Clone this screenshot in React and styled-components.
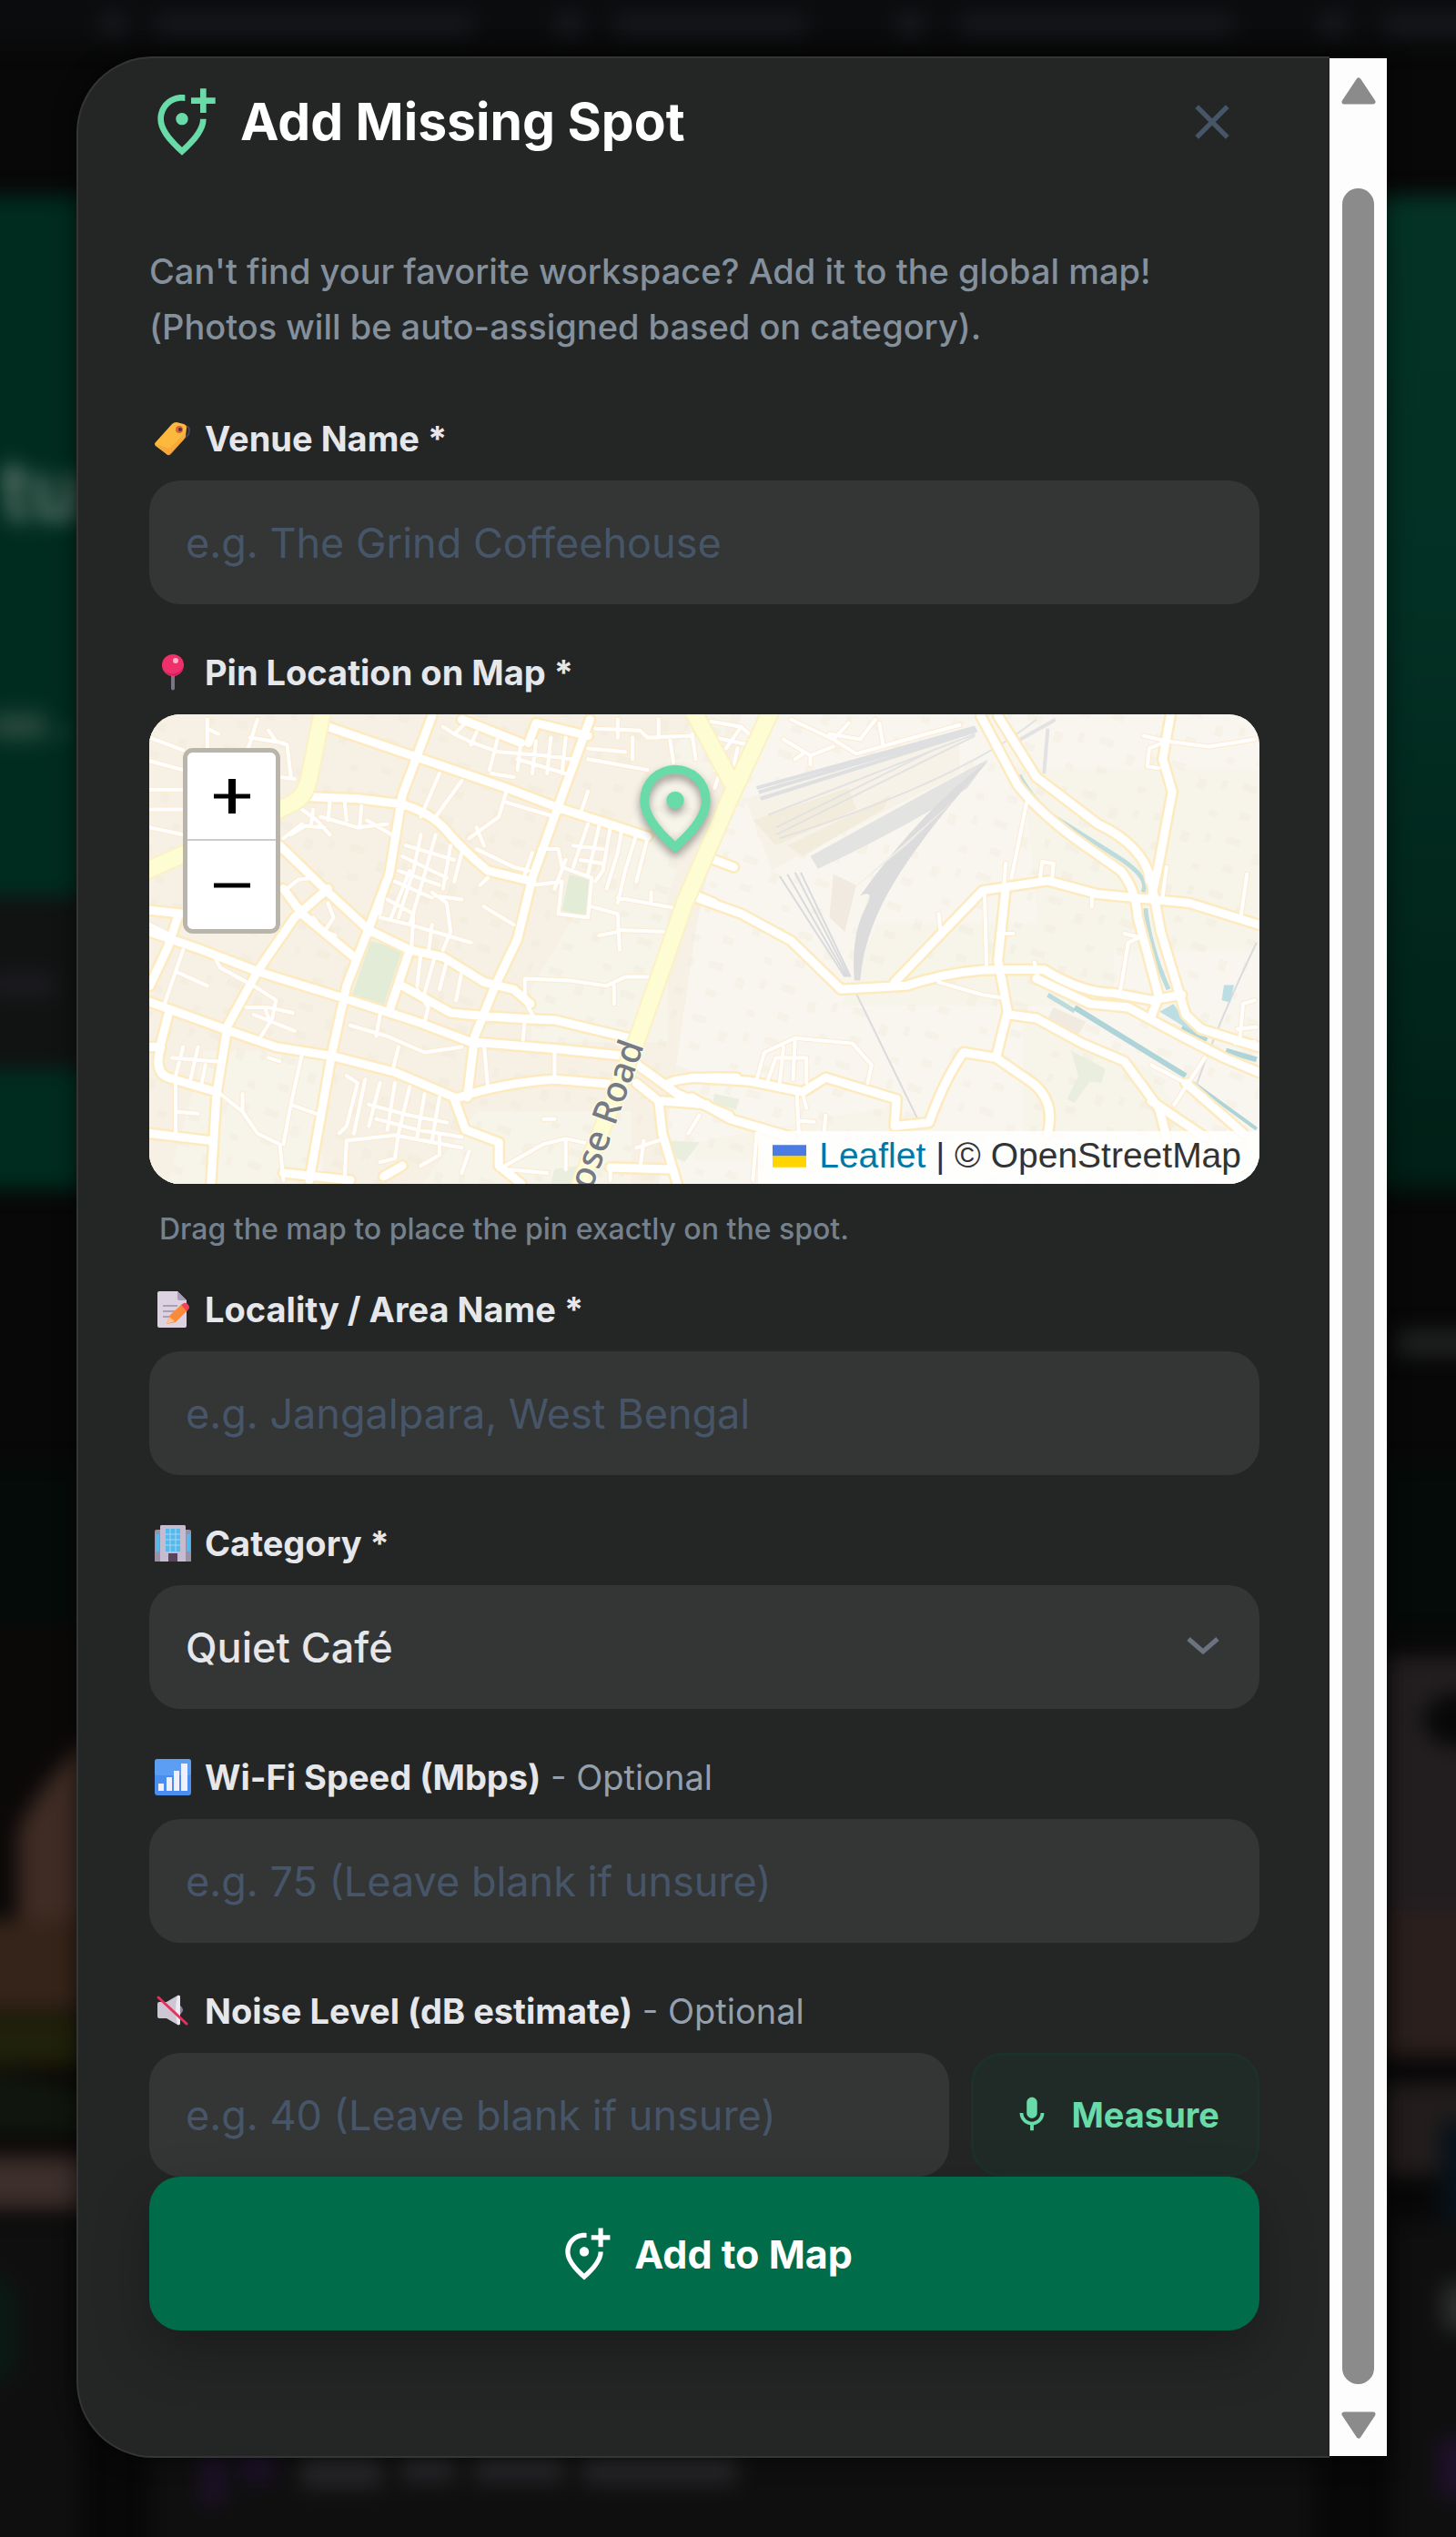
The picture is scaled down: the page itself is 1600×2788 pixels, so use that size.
import styled, { createGlobalStyle } from "styled-components";
import { useState } from "react";
import { MdOutlineAddLocationAlt, MdOutlineMic, MdClose } from "react-icons/md";

const GlobalStyle = createGlobalStyle`
  * { box-sizing: border-box; }
  body {
    margin: 0;
    background: #080909;
    font-family: Inter, "Liberation Sans", sans-serif;
    color: #e5e7eb;
  }
  button, input, select { font-family: inherit; }
`;

const Page = styled.div`
  position: relative;
  min-height: 100vh;
  overflow: hidden;
`;
const BackdropArt = styled.svg`
  position: absolute;
  top: 0;
  left: 0;
  width: 100%;
  height: 100%;
`;
const Overlay = styled.div`
  position: relative;
  display: flex;
  padding: 62px 76px 86px 84px;
`;
const Modal = styled.section`
  flex: 1;
  display: flex;
  min-width: 0;
  border-radius: 84px 0 0 84px;
  box-shadow: 0 0 24px rgba(0, 0, 0, 0.6);
`;
const ModalBody = styled.div`
  flex: 1;
  min-width: 0;
  padding: 28px 77px 138px 78px;
  border: 2px solid #343635;
  border-right: none;
  border-radius: 84px 0 0 84px;
  background: #242625;
`;
const ScrollTrack = styled.div`
  display: flex;
  flex-direction: column;
  align-items: center;
  width: 63px;
  margin: 2px 0;
  padding: 20px 0 18px;
  background: #fdfdfd;
`;
const ScrollThumb = styled.div`
  flex: 1;
  width: 35px;
  margin: 92px 0 30px;
  border-radius: 18px;
  background: #8b8b8b;
`;
const ScrollArrow = styled.svg`
  width: 40px;
  height: 31px;
  fill: #8b8b8b;
  stroke: #8b8b8b;
  stroke-width: 5;
  stroke-linejoin: round;
`;

const Header = styled.header`
  display: flex;
  align-items: center;
  justify-content: space-between;
  height: 84px;
  margin-bottom: 92px;
  padding-right: 20px;
`;
const Title = styled.h2`
  display: flex;
  align-items: center;
  gap: 24px;
  margin: 0;
  font-size: 57px;
  font-weight: 700;
  line-height: 84px;
  color: #ffffff;

  svg {
    color: #68dba9;
    margin-left: -4px;
  }
`;
const CloseButton = styled.button`
  display: flex;
  padding: 0;
  border: none;
  background: none;
  color: #475569;
`;
const Intro = styled.p`
  margin: 0 0 62px;
  font-size: 38px;
  font-weight: 500;
  line-height: 61px;
  color: #84909c;
`;

const Form = styled.form`
  display: flex;
  flex-direction: column;
`;
const Field = styled.div`
  display: flex;
  flex-direction: column;
  gap: 16px;
  margin-bottom: ${(props) => props.$space ?? 45}px;
`;
const Label = styled.label`
  display: flex;
  align-items: center;
  padding-left: 6px;
  font-size: 38px;
  font-weight: 700;
  line-height: 60px;
  color: #e5e7eb;
  white-space: pre;

  svg {
    width: 40px;
    height: 40px;
    margin-right: 15px;
  }
`;
const Optional = styled.span`
  font-weight: 400;
  color: #94a0ad;
`;
const TextInput = styled.input`
  flex: 1;
  width: 100%;
  min-width: 0;
  min-height: 136px;
  padding: 0 40px;
  border: none;
  border-radius: 34px;
  background: #333635;
  font-size: 45px;
  color: #e5e7eb;

  &::placeholder {
    color: #475569;
    opacity: 1;
  }
`;
const SelectWrap = styled.div`
  position: relative;
  display: flex;

  svg {
    position: absolute;
    right: 40px;
    top: 46px;
    pointer-events: none;
  }
`;
const Select = styled.select`
  width: 100%;
  height: 136px;
  padding: 0 40px;
  border: none;
  border-radius: 34px;
  background: #333635;
  appearance: none;
  font-size: 45px;
  font-weight: 500;
  color: #e5e7eb;
`;
const InputRow = styled.div`
  display: flex;
  gap: 24px;
`;
const MeasureButton = styled.button`
  display: flex;
  align-items: center;
  justify-content: center;
  gap: 20px;
  padding: 0 41px;
  border: 3px solid #1c3129;
  border-radius: 34px;
  background: #202b28;
  font-size: 38px;
  font-weight: 700;
  color: #68dba9;
`;
const SubmitButton = styled.button`
  display: flex;
  align-items: center;
  justify-content: center;
  gap: 24px;
  height: 169px;
  border: none;
  border-radius: 34px;
  background: #006c49;
  box-shadow: 0 24px 60px rgba(0, 0, 0, 0.25);
  font-size: 43px;
  font-weight: 700;
  color: #ffffff;
`;

const MapBox = styled.div`
  position: relative;
  height: 516px;
  border-radius: 34px;
  overflow: hidden;
  background: #f7f3ea;
`;
const MapArt = styled.svg`
  display: block;
  width: 100%;
  height: 100%;

  path { vector-effect: non-scaling-stroke; }
`;
const ZoomControl = styled.div`
  position: absolute;
  left: 37px;
  top: 37px;
  display: flex;
  flex-direction: column;
  border: 5px solid #b9b5ab;
  border-radius: 11px;
`;
const ZoomButton = styled.button`
  display: flex;
  align-items: center;
  justify-content: center;
  width: 97px;
  height: 97px;
  padding: 0;
  border: none;
  border-bottom: ${(props) => (props.$divided ? "2px solid #cccccc" : "none")};
  border-radius: ${(props) => (props.$divided ? "6px 6px 0 0" : "0 0 6px 6px")};
  background: #ffffff;
`;
const MapPin = styled.svg`
  position: absolute;
  left: 50%;
  top: 46px;
  width: 116px;
  height: 116px;
  margin-left: -90px;
  fill: #68dba9;
  filter: drop-shadow(0 5px 5px rgba(0, 0, 0, 0.4));
`;
const Attribution = styled.div`
  position: absolute;
  right: 0;
  bottom: 0;
  display: flex;
  align-items: center;
  padding: 0 20px 4px 16px;
  background: rgba(255, 255, 255, 0.85);
  font-family: "Liberation Sans", Arial, sans-serif;
  font-size: 39px;
  line-height: 54px;
  white-space: pre;
  color: #333333;

  a {
    display: flex;
    align-items: center;
    gap: 14px;
    color: #0078a8;
    text-decoration: none;
  }
`;
const Hint = styled.p`
  margin: 12px 0 0;
  padding-left: 11px;
  font-size: 32px;
  font-weight: 500;
  line-height: 44px;
  color: #75818d;
`;

const TagIcon = () => (
  <svg viewBox="0 0 40 40" aria-hidden="true">
    <path d="M28 8q10-4 10 3t-8 9" fill="none" stroke="#4a4356" strokeWidth="2" />
    <path d="M1 24 19 4q2-2 5-2l8 2q3 1 3 4l-1 9q0 2-2 4L17 37q-2 2-4 0L1 28q-2-2 0-4z" fill="#fdb93e" />
    <path d="M1 26 14 38q2 1 4-1l14-16 2-8-16 16q-2 2-4 1z" fill="#f79f3c" opacity=".6" />
    <circle cx="27" cy="10" r="4" fill="#d9643a" />
    <circle cx="28" cy="10" r="2" fill="#4a2f4e" />
  </svg>
);
const PushpinIcon = () => (
  <svg viewBox="0 0 40 40" aria-hidden="true">
    <path d="M18 20h4v18q-2 3-4 0z" fill="#7b7482" />
    <circle cx="20" cy="12" r="12" fill="#f0306a" />
    <path d="M9 16a12 12 0 0 0 23-4 13 13 0 0 1-23 4z" fill="#cc2160" />
    <circle cx="23" cy="7" r="3" fill="#ffb3cb" />
  </svg>
);
const MemoIcon = () => (
  <svg viewBox="0 0 40 40" aria-hidden="true">
    <path d="M3 2q0-2 2-2h20l10 10v28q0 2-2 2H5q-2 0-2-2z" fill="#dcd2e2" />
    <path d="M25 0l10 10H27q-2 0-2-2z" fill="#a99db8" />
    <path d="M9 15h16v2H9zm0 6h13v2H9zm0 6h8v2H9z" fill="#aaa0b5" />
    <path d="M13 36l3-9 13-12 7 6-13 13z" fill="#f98a3c" />
    <path d="M29 15l3-2q3-1 5 2t0 5l-2 2z" fill="#f2435b" />
    <path d="M13 36l3-8 6 5z" fill="#ffc38d" />
  </svg>
);
const OfficeIcon = () => (
  <svg viewBox="0 0 40 40" aria-hidden="true">
    <path d="M0 7q0-2 2-2h6v35H0zM32 5h6q2 0 2 2v33h-8z" fill="#9b91a6" />
    <path d="M6 1q0-1 2-1h24q2 0 2 1v39H6z" fill="#c6bccf" />
    <path d="M12 4h16v25H12zM1 10h4v19H1zM35 10h4v19h-4z" fill="#55b9ee" />
    <path d="M17 4v25M23 4v25M12 10h16M12 16h16M12 22h16" stroke="#a7d6ee" strokeWidth="1" />
    <path d="M15 31h10v9H15z" fill="#59445f" />
  </svg>
);
const SignalIcon = () => (
  <svg viewBox="0 0 40 40" aria-hidden="true">
    <rect width="40" height="40" rx="3" fill="#4a8ff0" />
    <rect width="40" height="18" rx="3" fill="#68a8f7" opacity=".6" />
    <path d="M4 27h6v8H4zM13 20h6v15h-6zM21 13h6v22h-6zM29 5h7v30h-7z" fill="#f3eefb" />
  </svg>
);
const MutedIcon = () => (
  <svg viewBox="0 0 40 40" aria-hidden="true">
    <path d="M3 12q0-2 2-2h8L25 3q3-1 3 2v28q0 3-3 2l-12-7H5q-2 0-2-2z" fill="#cfc6d4" />
    <path d="M25 3q3-1 3 2v28q0 3-3 2-4-16 0-32z" fill="#eee8f0" />
    <path d="M28 14q6 4 0 10z" fill="#8d8396" />
    <path d="M4 5l31 29" stroke="#e8305f" strokeWidth="3" strokeLinecap="round" />
  </svg>
);

const westMinor = `
M60 100 150 135M60 165 150 190M60 245 150 245M60 300 150 300M60 350 150 370M215 50 215 130M215 75 245 90M350 50 325 130M380 80 400 110 430 120 440 210
M330 100 420 115M410 210 450 215M470 300 510 330 545 370M440 370 480 345 530 350M500 300 495 340M545 280 540 330M585 280 590 330M630 290 625 350M520 320 620 350 700 340M645 330 720 375
M60 620 120 650M150 690 100 840M130 750 215 790M230 700 250 740 340 790 400 830 390 880 360 930M320 850 380 850 445 865M340 870 450 915M370 850 380 880
M430 520 460 495 500 490M540 560 555 600 530 640M500 600 530 640 560 650M420 380 470 340
M850 70 880 90 920 50M880 90 930 115 1000 140M940 85 925 120M1000 90 975 190M1060 110 1050 190M1100 110 1090 200M1140 100 1130 200M1180 100 1170 200M1000 140 1120 150 1200 160M1050 160 1180 200M980 200 1040 210
M1240 160 1400 190M1260 75 1380 80 1400 100 1520 95M1320 50 1320 100M1360 100 1360 160M1430 50 1430 100M1460 100 1470 170M1520 90 1530 160M1240 130 1340 140
M840 200 790 320M900 220 830 320M1020 250 1000 320 920 380M1020 280 1150 320M940 350 960 400M1240 250 1220 310
M750 400 880 440M740 430 860 490M730 470 840 510M720 500 820 545M700 550 770 590M790 370 770 470 730 600M830 370 800 480 760 620M870 400 850 520M900 420 880 500
M680 600 760 620 860 650 925 670M820 530 860 560 870 640 850 690M830 540 900 550M770 590 765 680M820 620 810 700M760 470 710 600M700 490 680 590
M960 570 1040 620M940 410 1040 460 1080 470M1090 420 1070 480M970 490 950 510M1110 410 1160 410 1170 460 1250 490 1240 600 1160 590 1170 500 1090 510M1180 440 1150 520
M1240 340 1200 460M1270 345 1240 480M1300 350 1280 470 1260 500M1330 360 1320 420 1290 520M1370 370 1340 470 1320 560M1400 380 1370 500M1200 400 1280 410M1220 440 1280 450M1250 570 1320 590 1325 690M1320 545 1480 575M1320 635 1450 640M1270 650 1320 640M1410 530 1410 560
M1070 770 1190 775 1290 790 1340 765 1420 765M1070 770 1070 820M1310 790 1310 840M1070 830 1090 870M900 750 885 830M830 700 800 810M790 700 780 790M860 720 840 800M780 800 810 850 800 890
M600 900 700 930 800 975 900 960M680 870 670 930M730 960 715 1020M1070 880 1065 940M1150 970 1150 1050M960 950 970 1070
M150 960 130 1040M190 960 170 1050M120 990 240 1000M210 1010 200 1060M130 1060 130 1200M130 1140 190 1145M250 1090 310 1140 350 1200 410 1230 420 1330M310 1090 310 1140M470 980 440 1120 420 1230M440 1120 520 1150M380 990 410 1000
M590 1040 620 1060 590 1180 570 1200M640 1050 610 1200M680 1060 650 1180M720 1060 700 1190M760 1070 730 1200M800 1090 780 1210M840 1100 820 1220M650 1120 760 1150 860 1170M670 1160 780 1190 900 1210M590 1220 720 1205 900 1240M590 1220 585 1320M680 1280 720 1270 730 1200M790 1290 840 1260 840 1200M900 1310 920 1250
M1000 1300 1120 1230 1180 1215 1250 1230M1180 1220 1180 1300M1020 1300 1130 1310M1390 1220 1380 1300M1300 1290 1300 1330M1370 1240 1430 1220M1120 1160 1150 1160M1510 1200 1540 1150`;

const westMajor = `
M540 70 780 155 1020 240 1160 295 1400 375M820 40 740 260 705 480 650 630 590 790 550 980 490 1330M1245 50 1160 290 1090 490 1050 660 990 790 935 930 915 1100
M490 265 620 270 740 285Q820 310 860 360T970 470L1090 500M410 400 530 520 650 635 760 690 850 710 960 780 1040 800 1085 840
M60 640 200 690 350 750 600 830 780 890 920 945 1150 965 1340 985M60 835 260 910 400 960 550 985 720 1030 880 1100
M540 520 450 600 350 750 270 900 240 1090 225 1340M740 790 870 865Q1000 880 1150 885L1350 935M880 1105Q1000 1060 1150 1050L1320 1065
M420 520 470 590 610 710M900 50 1060 115M1080 115 1100 60 1240 95M880 1105 910 1190 1000 1225 1000 1290 1060 1340M60 1200 220 1220
M60 960 90 960Q70 1030 110 1045L240 1085M1360 1000 1480 1090 1620 1150M1370 1060 1430 1110 1440 1200 1480 1340M1450 1065Q1480 1040 1640 1045M1440 1110 1560 1120
M135 600 110 680 60 790M60 580 150 590M760 690 705 860M420 1310 600 1330M690 1320 740 1290M1300 1295 1460 1300M1510 530 1580 560M110 870 90 950`;

const eastMinor = `
M50 55 130 70 160 100M130 70 90 130M60 100 150 120M60 190 90 160M120 130 110 180M70 210 60 240M260 50 370 105 430 145M410 60 370 105M360 90 440 105 480 50M490 60 500 120M430 145 580 100 700 65M240 105 310 150 370 125M310 150 310 175M270 160 290 145
M875 280 835 490M820 450 815 520M765 530 770 740M645 590 650 640M910 490 915 445 945 450 940 500M1045 540 1045 570M800 645 840 645M1240 460 1230 540M1450 480 1435 590M1130 645 1170 655 1140 670 1120 800M645 780 760 815 820 825
M1180 95 1240 110 1350 125 1470 105M1240 110 1195 130 1190 180 1220 185M170 1050 190 975 270 935 420 950 470 1010 460 1060M200 1050 220 990 300 990 300 1060M240 960 230 1060M270 940 265 1050M275 1090 280 1200M280 1165 320 1168M350 1150 345 1210M290 1090 300 1130
M170 1200 160 1330M1470 830 1440 840 1430 950M1420 950 1470 945M1425 910 1475 905M1340 990 1260 1120M1200 1010 1290 1060M895 725 905 770M1180 440 1190 500`;

const eastMajor = `
M0 540 130 590 260 665 390 800 560 790Q690 745 800 745L920 745Q1020 810 1100 810L1200 830 1280 815M530 780 760 525 930 498 1060 535 1300 560 1480 620
M755 40 850 230Q900 300 1000 380L1120 470Q1160 520 1165 600L1220 820 1200 875M800 40 900 210 1060 340Q1180 400 1200 500L1225 640 1290 870 1330 910 1480 960
M1250 40 1230 160 1255 250 1220 450 1200 550M820 520 800 720 825 860 795 990 710 975Q660 1050 620 1170L530 1180M830 870 900 880 1020 950 1130 1000 1220 1130 1240 1210
M795 990 890 1060Q950 1110 930 1200M900 770 1040 840 1140 850 1280 930 1390 990 1480 1030M0 1045 150 1055 290 1085 350 1045 535 1105 530 1180M0 1100 100 1160 260 1210M60 440 110 460M1200 1110 1340 1210M1290 1060 1440 1200`;

const avenues =
  "M525 30 490 210Q480 270 430 290L160 420 40 475M1735 20 1622 270 1500 560 1440 740 1375 930 1300 1130 1215 1350M1525 30 1632 235";

const CityMap = () => (
  <MapArt viewBox="0 0 1220 516" preserveAspectRatio="xMidYMid slice" aria-hidden="true">
    <defs>
      <pattern id="blocks" width="83" height="61" patternUnits="userSpaceOnUse" patternTransform="rotate(18)">
        <path d="M6 5h16v8H6zM40 14h9v12h-9zM12 36h12v8H12zM62 44h9v7h-9zM66 8h6v10h-6z" fill="#efe8da" opacity=".3" />
      </pattern>
    </defs>
    <rect width="1220" height="516" fill="#f9f6ef" />
    <path d="M0 0h650L600 240 560 516H0z" fill="#f6f0e5" />
    <path d="M570 200 640 0h-40L420 300v60h150zM60 370h130v146H20zM300 516l60-80h170v80z" fill="#f7f4ea" />
    <path d="M960 60h260v200H980zM800 230h260v90H760zM960 330l140 60 50 70H960zM600 470l220-40v60H600z" fill="#f7f4ea" />
    <rect width="1220" height="516" fill="url(#blocks)" />

    <g transform="matrix(.4209 0 0 .3954 596 -14)">
      <path d="M140 270 700 90 700 200 290 420 210 470z" fill="#f6f2e7" />
      <path d="M160 330 410 240 430 300 220 400zM290 430 500 300 520 260 250 400z" fill="#f2ecdd" />
      <path d="M775 160Q700 200 310 430l20 35Q560 350 720 240z" fill="#e3e3e2" />
      <path d="M775 165Q600 300 440 540q40-20 15 30Q415 650 425 775l15 0Q450 640 530 500T775 165z" fill="#dcdcdc" />
      <path d="M560 400 650 310 700 260 400 540z" fill="#eeece7" />
      <path d="M740 72 170 240M742 75 175 252M745 80 180 270" fill="none" stroke="#dedfe0" strokeWidth="4" />
      <path d="M740 90 200 315M740 95 220 370M900 50Q700 220 230 380M640 130 220 350" fill="none" stroke="#e2e2e2" strokeWidth="2" />
      <path d="M850 110 950 50M930 75 920 200" fill="none" stroke="#e2e2e2" strokeWidth="4" />
      <path d="M230 485 400 765M250 480 405 765M270 475 410 765M285 475 415 765M420 790 590 1160M1475 670Q1380 880 1320 1060" fill="none" stroke="#d9dadd" strokeWidth="2" />
      <path d="M990 970 1080 1020 1070 1060 1040 1055 1000 1115 980 1105 1010 1040zM60 1090l65 15-10 30-60-20z" fill="#e9eede" />
      <path d="M945 850 1030 890 1010 925 930 880zM370 480 430 510 400 640 360 600z" fill="#f1eae0" />
      <path d="M855 205Q900 290 960 330T1110 430 1178 530M1185 575Q1195 680 1245 800M930 815 1000 860" fill="none" stroke="#bcdbdc" strokeWidth="5" />
      <path d="M1000 850 1290 1040M1395 970 1475 995M1280 905 1345 942" fill="none" stroke="#aed4d8" strokeWidth="6" />
      <path d="M1310 1060 1475 1188" fill="none" stroke="#aed4d8" strokeWidth="4" />
      <path d="M1222 862 1258 840 1300 905 1345 942zM1390 788h26l-10 48-22-6z" fill="#bcdde2" />
    </g>
    <g transform="matrix(.4082 0 0 .3954 -24 -14)">
      <path d="M655 665 740 690 690 845 605 815zM1190 480 1255 500 1240 600 1170 580z" fill="#e3ecd6" />
      <path d="M1150 1300 1220 1290 1210 1340 1140 1340zM1460 1220 1540 1225 1500 1280 1460 1260z" fill="#e9eede" />
    </g>

    <g fill="none" strokeLinejoin="round" strokeLinecap="round">
      <g transform="matrix(.4082 0 0 .3954 -24 -14)">
        <path d={westMinor} stroke="#fdeacf" strokeWidth="6" />
        <path d={westMajor} stroke="#fdebbf" strokeWidth="14" />
      </g>
      <g transform="matrix(.4209 0 0 .3954 596 -14)">
        <path d={eastMinor} stroke="#fdeacf" strokeWidth="6" />
        <path d={eastMajor} stroke="#fdebbf" strokeWidth="14" />
        <path d={eastMinor} stroke="#ffffff" strokeWidth="4" />
        <path d={eastMajor} stroke="#ffffff" strokeWidth="9" />
      </g>
      <g transform="matrix(.4082 0 0 .3954 -24 -14)">
        <path d={westMinor} stroke="#ffffff" strokeWidth="4" />
        <path d={westMajor} stroke="#ffffff" strokeWidth="9" />
        <path d={avenues} stroke="#fcf0c6" strokeWidth="21" />
        <path d={avenues} stroke="#fefcd2" strokeWidth="17" />
      </g>
    </g>
    <text
      transform="translate(544 364) rotate(-70)"
      textAnchor="end"
      fontFamily="Noto Sans, sans-serif"
      fontSize="39"
      fontWeight="500"
      fill="#757a85"
      stroke="#fdfbe6"
      strokeWidth="3"
      paintOrder="stroke"
    >
      ose Road
    </text>
  </MapArt>
);

const Backdrop = () => (
  <BackdropArt viewBox="0 0 1600 2788" preserveAspectRatio="none" aria-hidden="true">
    <defs>
      <filter id="soft" x="-20%" y="-20%" width="140%" height="140%" colorInterpolationFilters="sRGB">
        <feGaussianBlur stdDeviation="11" />
      </filter>
      <linearGradient id="hero" x1="0" y1="0" x2="0" y2="1">
        <stop offset="0" stopColor="#043325" />
        <stop offset=".4" stopColor="#033024" />
        <stop offset="1" stopColor="#011f16" />
      </linearGradient>
    </defs>
    <rect width="1600" height="2788" fill="#080808" />
    <g filter="url(#soft)">
      <rect x="-40" y="-40" width="1680" height="90" fill="#0b0c0e" />
      <path
        d="M110 14h28v26h-28zM170 16h350v22H170zM610 14h30v26h-30zM675 16h210v22H675zM985 14h30v26h-30zM1055 16h300v22h-300zM1450 14h30v26h-30zM1520 16h120v22h-120z"
        fill="#16181c"
      />
      <rect x="-40" y="215" width="800" height="1092" fill="#002c1f" />
      <rect x="760" y="215" width="900" height="1092" fill="url(#hero)" />
      <rect x="-40" y="985" width="160" height="190" fill="#111212" />
      <text x="0" y="572" fontSize="92" fontWeight="700" fill="#5b756c">tu</text>
      <path d="M-10 784h60v28h-60zM62 800h16v10H62z" fill="#29493e" />
      <rect x="-10" y="1070" width="70" height="24" fill="#1c1c21" />
      <rect x="1535" y="1462" width="90" height="28" fill="#1f2121" />
      <rect x="-40" y="1610" width="1680" height="180" fill="#050b09" />
      <rect x="-40" y="1790" width="140" height="640" fill="#0b0808" />
      <path d="M110 1900Q50 1950 20 2010V2110H110z" fill="#3f2c24" />
      <rect x="-40" y="2110" width="150" height="100" fill="#352419" />
      <rect x="-40" y="2215" width="140" height="55" fill="#20210a" />
      <path d="M-40 2270 110 2300V2345H-40z" fill="#10160d" />
      <rect x="-40" y="2370" width="150" height="58" fill="#3d2f2b" />
      <rect x="1520" y="1820" width="120" height="280" fill="#221e1f" />
      <ellipse cx="1604" cy="1890" rx="40" ry="30" fill="#080808" />
      <rect x="1520" y="2100" width="120" height="160" fill="#2a1f1c" />
      <rect x="1520" y="2290" width="120" height="100" fill="#221d1c" />
      <rect x="1582" y="2330" width="60" height="110" fill="#08121a" />
      <path d="M-40 2440H90V2830H-40zM165 2440H1445V2830H165zM1530 2440H1650V2830H1530z" fill="#0f0f0f" />
      <rect x="-40" y="2500" width="60" height="120" rx="30" fill="#0b1914" />
      <rect x="1585" y="2510" width="40" height="50" fill="#2b2e2d" />
      <path d="M222 2690h24v62h-24zM265 2690h36v36h-36zM1580 2680h40v64h-40z" fill="#1e112b" />
      <path d="M330 2696h90v38h-90zM440 2696h60v32h-60zM520 2696h100v32H520zM640 2696h170v34H640z" fill="#252528" />
    </g>
  </BackdropArt>
);

const AddSpotForm = () => {
  const [category, setCategory] = useState("Quiet Café");

  return (
    <Form onSubmit={(e) => e.preventDefault()}>
      <Field>
        <Label htmlFor="venue"><TagIcon />Venue Name *</Label>
        <TextInput id="venue" type="text" placeholder="e.g. The Grind Coffeehouse" />
      </Field>
      <Field $space={36}>
        <Label as="div"><PushpinIcon />Pin Location on Map *</Label>
        <MapBox>
          <CityMap />
          <MapPin viewBox="0 0 24 24" aria-hidden="true">
            <path d="M12 12q.825 0 1.413-.587Q14 10.825 14 10t-.587-1.413Q12.825 8 12 8q-.825 0-1.412.587Q10 9.175 10 10t.588 1.413Q11.175 12 12 12Zm0 7.35q3.05-2.8 4.525-5.088Q18 11.975 18 10.2q0-2.725-1.738-4.462Q14.525 4 12 4T7.737 5.738Q6 7.475 6 10.2q0 1.775 1.475 4.062Q8.95 16.55 12 19.35ZM12 22q-4.025-3.425-6.012-6.363Q4 12.7 4 10.2q0-3.75 2.413-5.975Q8.825 2 12 2t5.588 2.225Q20 6.45 20 10.2q0 2.5-1.988 5.437Q16.025 18.575 12 22Z" />
          </MapPin>
          <ZoomControl>
            <ZoomButton type="button" aria-label="Zoom in" $divided>
              <svg width="42" height="42" viewBox="0 0 42 42" stroke="#000" fill="none">
                <path d="M1 21h40" strokeWidth="5" />
                <path d="M21 2v38" strokeWidth="8" />
              </svg>
            </ZoomButton>
            <ZoomButton type="button" aria-label="Zoom out">
              <svg width="42" height="42" viewBox="0 0 42 42" stroke="#000" fill="none">
                <path d="M1 21h40" strokeWidth="5" />
              </svg>
            </ZoomButton>
          </ZoomControl>
          <Attribution>
            <a href="#leaflet">
              <svg width="37" height="25" viewBox="0 0 12 8" aria-hidden="true">
                <path fill="#4C7BE1" d="M0 0h12v4H0z" />
                <path fill="#FFD500" d="M0 4h12v4H0z" />
              </svg>
              Leaflet
            </a>
            <span> | © OpenStreetMap</span>
          </Attribution>
        </MapBox>
        <Hint>Drag the map to place the pin exactly on the spot.</Hint>
      </Field>
      <Field>
        <Label htmlFor="locality"><MemoIcon />Locality / Area Name *</Label>
        <TextInput id="locality" type="text" placeholder="e.g. Jangalpara, West Bengal" />
      </Field>
      <Field>
        <Label htmlFor="category"><OfficeIcon />Category *</Label>
        <SelectWrap>
          <Select id="category" value={category} onChange={(e) => setCategory(e.target.value)}>
            <option>Quiet Café</option>
          </Select>
          <svg width="44" height="44" viewBox="0 0 44 44" fill="none" stroke="#6b7280" strokeWidth="5" aria-hidden="true">
            <path d="M6 13l16 14 16-14" />
          </svg>
        </SelectWrap>
      </Field>
      <Field>
        <Label htmlFor="wifi"><SignalIcon />Wi-Fi Speed (Mbps)<Optional> - Optional</Optional></Label>
        <TextInput id="wifi" type="text" placeholder="e.g. 75 (Leave blank if unsure)" />
      </Field>
      <Field $space={0}>
        <Label htmlFor="noise"><MutedIcon />Noise Level (dB estimate)<Optional> - Optional</Optional></Label>
        <InputRow>
          <TextInput id="noise" type="text" placeholder="e.g. 40 (Leave blank if unsure)" />
          <MeasureButton type="button">
            <MdOutlineMic size={46} />
            Measure
          </MeasureButton>
        </InputRow>
      </Field>
      <SubmitButton type="submit">
        <MdOutlineAddLocationAlt size={62} />
        Add to Map
      </SubmitButton>
    </Form>
  );
};

const App = () => (
  <Page>
    <GlobalStyle />
    <Backdrop />
    <Overlay>
      <Modal role="dialog" aria-labelledby="dialog-title">
        <ModalBody>
          <Header>
            <Title id="dialog-title">
              <MdOutlineAddLocationAlt size={80} />
              Add Missing Spot
            </Title>
            <CloseButton type="button" aria-label="Close">
              <MdClose size={64} />
            </CloseButton>
          </Header>
          <Intro>
            Can't find your favorite workspace? Add it to the global map! (Photos will be
            auto-assigned based on category).
          </Intro>
          <AddSpotForm />
        </ModalBody>
        <ScrollTrack aria-hidden="true">
          <ScrollArrow viewBox="0 0 40 31"><path d="M20 4 36 28H4z" /></ScrollArrow>
          <ScrollThumb />
          <ScrollArrow viewBox="0 0 40 31"><path d="M20 27 4 3h32z" /></ScrollArrow>
        </ScrollTrack>
      </Modal>
    </Overlay>
  </Page>
);

export default App;
